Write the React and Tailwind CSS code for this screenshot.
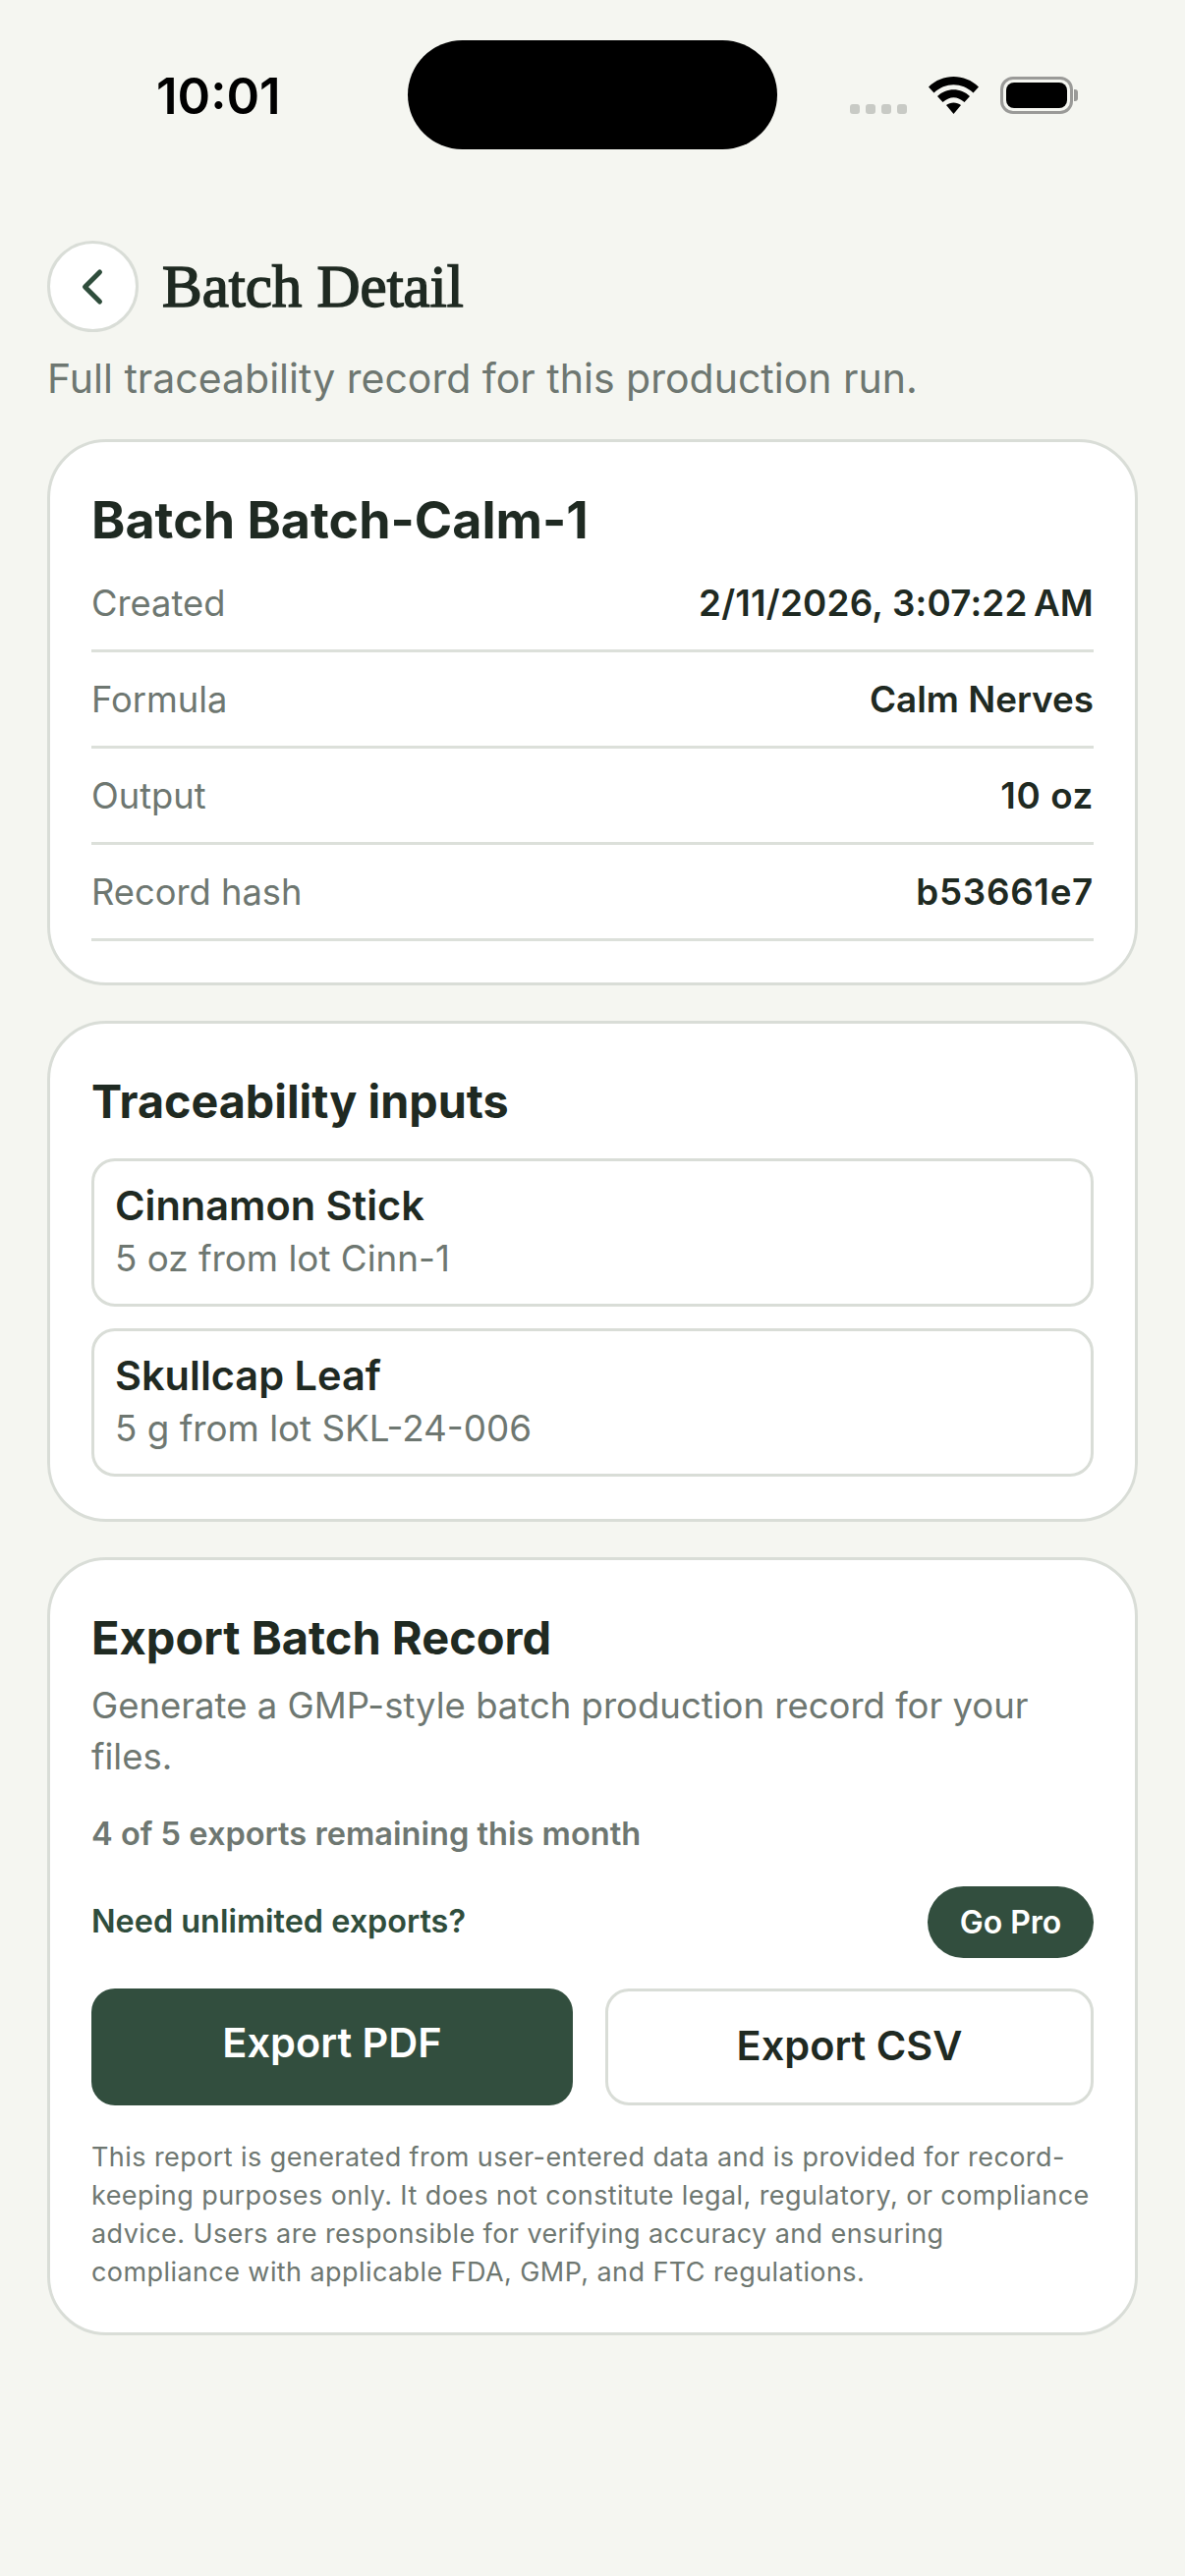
function Row({ label, value, track = "" }) {
  return (
    <div className="flex items-center justify-between h-[98px] border-b-[3px] border-[#dce0da]">
      <span className="text-[36.3px] text-[#6e7771] pt-[2px]">{label}</span>
      <span className={"text-[36.8px] font-semibold text-[#1f2a22] " + track}>{value}</span>
    </div>
  );
}
function Input({ name, detail }) {
  return (
    <div className="h-[151px] rounded-[24px] border-[3px] border-[#d9ddd7] px-[21px] pb-[3px] flex flex-col justify-center">
      <div className="text-[41.5px] leading-[54px] font-semibold text-[#1f2a22] -mt-[2px]">{name}</div>
      <div className="text-[36.8px] leading-[48px] text-[#6e7771] mt-[3px]">{detail}</div>
    </div>
  );
}
const Card = ({ className, children }) => (
  <section className={"rounded-[60px] border-[3px] border-[#d9ddd7] bg-white px-[42px] " + className}>{children}</section>
);
export default function App() {
  return (
    <div className="min-h-[2622px] bg-[#f5f6f1] px-[48px] [font-family:Inter,'Liberation_Sans',sans-serif]">
      <header className="h-[245px] relative flex items-start">
        <span className="absolute left-[111px] top-[67px] text-[51px] leading-[62px] font-semibold text-black">10:01</span>
        <div className="absolute left-[367px] top-[41px] w-[376px] h-[111px] rounded-[56px] bg-black" />
        <div className="absolute left-[817px] top-[78px] flex items-end gap-[22px]">
          <div className="flex gap-[6px]">
            {[0, 1, 2, 3].map((i) => (
              <span key={i} className="w-[10px] h-[10px] rounded-[3px] bg-[#c8cac5]" />
            ))}
          </div>
          <svg width="51" height="38" viewBox="0 0 51 38">
            <path d="M0 10.5 C14 -3.5 37 -3.5 51 10.5 L45.5 16.5 C34 5.5 17 5.5 5.5 16.5 Z" fill="#000" />
            <path d="M9 20 C18 11 33 11 42 20 L36.5 26 C29 19.5 22 19.5 14.5 26 Z" fill="#000" />
            <path d="M18 29 C22 25.5 29 25.5 33 29 L25.5 38 Z" fill="#000" />
          </svg>
          <div className="flex items-center gap-[1px]">
            <div className="w-[74px] h-[38px] rounded-[13px] border-[3px] border-[#9a9a98] p-[3px]">
              <div className="w-full h-full rounded-[8px] bg-black" />
            </div>
            <div className="w-[4px] h-[12px] rounded-r-[3px] bg-[#9a9a98]" />
          </div>
        </div>
      </header>

      <div className="flex items-center gap-[24px] h-[93px]">
        <button className="w-[93px] h-[93px] rounded-full border-[3px] border-[#d9ddd7] bg-white flex items-center justify-center">
          <svg width="30" height="42" viewBox="0 0 30 42" fill="none" stroke="#2f4d3c" strokeWidth="5" strokeLinecap="round" strokeLinejoin="round">
            <path d="M21.5 6 L6.5 21 L21.5 36" />
          </svg>
        </button>
        <h1 className="text-[61px] leading-[76px] font-normal text-[#1f2a22] [font-family:'Liberation_Serif',serif] [-webkit-text-stroke:1.6px_#1f2a22]">Batch Detail</h1>
      </div>
      <p className="mt-[22px] text-[41px] leading-[50px] text-[#6e7771]">Full traceability record for this production run.</p>

      <div className="mt-[37px] flex flex-col gap-[36px]">
        <Card className="h-[556px] pt-[43px]">
          <h2 className="text-[52px] leading-[73px] font-bold text-[#1f2a22]">Batch Batch-Calm-1</h2>
          <Row label="Created" value={"2/11/2026, 3:07:22\u202fAM"} track="tracking-[0.2px]" />
          <Row label="Formula" value="Calm Nerves" />
          <Row label="Output" value="10 oz" track="tracking-[0.6px]" />
          <Row label="Record hash" value="b53661e7" track="tracking-[0.7px]" />
        </Card>

        <Card className="h-[510px] pt-[48px]">
          <h2 className="text-[46.7px] leading-[62px] font-bold text-[#1f2a22]">Traceability inputs</h2>
          <div className="mt-[27px] flex flex-col gap-[22px]">
            <Input name="Cinnamon Stick" detail="5 oz from lot Cinn-1" />
            <Input name="Skullcap Leaf" detail="5 g from lot SKL-24-006" />
          </div>
        </Card>

        <Card className="h-[792px] pt-[48px]">
          <h2 className="text-[47px] leading-[62px] font-bold text-[#1f2a22]">Export Batch Record</h2>
          <p className="mt-[12px] text-[36.5px] leading-[52px] text-[#6e7771]">Generate a GMP-style batch production record for your files.</p>
          <p className="mt-[30px] text-[32.6px] leading-[44px] font-semibold text-[#6e7771]">4 of 5 exports remaining this month</p>
          <div className="mt-[32px] flex items-center justify-between">
            <span className="text-[32.4px] font-semibold text-[#2f4d3c]">Need unlimited exports?</span>
            <span className="h-[73px] w-[169px] rounded-full bg-[#324e3e] text-white text-[32px] font-semibold flex items-center justify-center">Go Pro</span>
          </div>
          <div className="mt-[31px] flex gap-[33px]">
            <button className="w-[490px] h-[119px] rounded-[24px] bg-[#324e3e] text-white text-[41.5px] font-semibold pb-[8px]">Export PDF</button>
            <button className="flex-1 h-[119px] rounded-[24px] border-[3px] border-[#d9ddd7] bg-white text-[#1f2a22] text-[41.5px] font-semibold pb-[3px]">Export CSV</button>
          </div>
          <p className="mt-[33px] text-[27px] leading-[39px] tracking-[0.42px] text-[#6e7771]">This report is generated from user-entered data and is provided for record-keeping purposes only. It does not constitute legal, regulatory, or compliance advice. Users are responsible for verifying accuracy and ensuring compliance with applicable FDA, GMP, and FTC regulations.</p>
        </Card>
      </div>
    </div>
  );
}
